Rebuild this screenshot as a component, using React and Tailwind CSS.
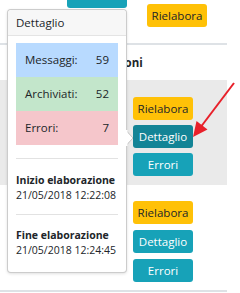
const Btn = ({ kind = 'info', children, className = '' }) => {
  const colors = {
    warn: 'bg-[#ffc107] text-[#212529]',
    info: 'bg-[#17a2b8] text-white',
    active: 'bg-[#138496] text-white',
  };
  return (
    <div className={`w-[60px] h-[23px] rounded-[3px] flex items-center justify-center text-[11.5px] ${colors[kind]} ${className}`}>
      {children}
    </div>
  );
};

const Stat = ({ label, value, bg }) => (
  <div className={`h-[34px] flex items-center justify-between px-[9px] text-[11.5px] text-[#212529] ${bg}`}>
    <span>{label}</span>
    <span>{value}</span>
  </div>
);

export default function App() {
  return (
    <div className="relative w-[240px] h-[293px] overflow-hidden bg-white font-['Open_Sans',sans-serif] text-[#212529]">
      {/* background table */}
      <div className="w-[227px]">
        <div className="h-[45px] flex items-start border-b-2 border-[#dee2e6]">
          <div className="ml-[67px] mt-[-15px] w-[60px] h-[23px] rounded-[3px] bg-[#17a2b8]" />
          <Btn kind="warn" className="ml-[20px] mt-[4px]">Rielabora</Btn>
        </div>
        <div className="h-[35px] flex items-center pl-[80px] font-bold text-[11.5px]">Operazioni</div>
        <div className="h-[105px] bg-[#eaeaea] pl-[133px] pt-[17px] flex flex-col gap-[5px]">
          <Btn kind="warn">Rielabora</Btn>
          <Btn kind="active">Dettaglio</Btn>
          <Btn>Errori</Btn>
        </div>
        <div className="h-[107px] border-b-2 border-[#dee2e6] pl-[133px] pt-[16px] flex flex-col gap-[6px]">
          <Btn kind="warn">Rielabora</Btn>
          <Btn>Dettaglio</Btn>
          <Btn>Errori</Btn>
        </div>
      </div>

      {/* popover */}
      <div className="absolute left-[7px] top-[9px] w-[120px] h-[264px] bg-white border border-black/20 rounded-[4px] shadow-[0_1px_3px_rgba(0,0,0,0.12)]">
        <div className="h-[26px] flex items-center px-[8px] text-[11.5px] bg-[#f7f7f7] border-b border-[#e4e4e4] rounded-t-[4px]">
          Dettaglio
        </div>
        <div className="px-[8px] pt-[7px]">
          <Stat label="Messaggi:" value="59" bg="bg-[#b8daff]" />
          <Stat label="Archiviati:" value="52" bg="bg-[#c3e6cb]" />
          <Stat label="Errori:" value="7" bg="bg-[#f5c6cb]" />
          <div className="mt-[13px] border-t border-[#e2e2e2]" />
          <div className="pt-[14px] pb-[11px] text-[10.5px] leading-[15px] whitespace-nowrap">
            <div className="font-bold">Inizio elaborazione</div>
            <div>21/05/2018 12:22:08</div>
          </div>
          <div className="border-t border-[#e2e2e2]" />
          <div className="pt-[13px] text-[10.5px] leading-[15px] whitespace-nowrap">
            <div className="font-bold">Fine elaborazione</div>
            <div>21/05/2018 12:24:45</div>
          </div>
        </div>
      </div>
      <svg className="absolute left-[126px] top-[130px]" width="9" height="16" viewBox="0 0 9 16">
        <polygon points="0,0.5 7,8 0,15.5" fill="white" stroke="rgba(0,0,0,0.2)" />
        <rect x="0" y="0" width="1.5" height="16" fill="white" />
      </svg>

      {/* red annotation arrow */}
      <svg className="absolute left-0 top-0" width="240" height="293" viewBox="0 0 240 293">
        <line x1="234" y1="83" x2="200" y2="128" stroke="#e8202a" strokeWidth="2" />
        <polygon points="193,137 207.5,129.5 196.5,121" fill="#e8202a" />
      </svg>
    </div>
  );
}
